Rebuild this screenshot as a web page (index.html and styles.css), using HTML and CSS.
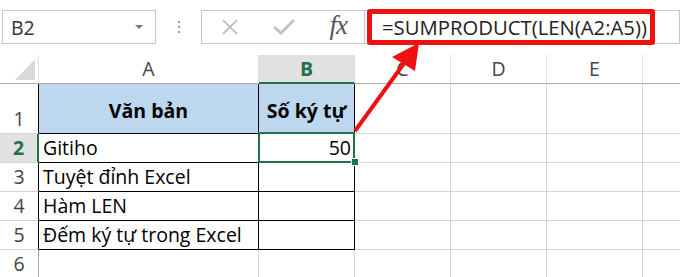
FILE: index.html
```html
<!DOCTYPE html>
<html lang="vi">
<head>
  <meta charset="UTF-8" />
  <title>SUMPRODUCT LEN</title>
  <link rel="stylesheet" href="styles.css">
</head>
<body>
  <div class="bar">
    <div class="namebox">
      <span>B2</span>
      <span class="caret"></span>
    </div>
    <div class="grip"><i></i><i></i><i></i></div>
    <div class="fnbox">
      <svg class="ico" width="18" height="16" viewBox="0 0 18 16">
        <path d="M2 1 L16 15 M16 1 L2 15" stroke="#b4b4b4" stroke-width="1.6" fill="none"/>
      </svg>
      <svg class="ico" width="22" height="16" viewBox="0 0 22 16">
        <path d="M1 8 L8 14 L21 1" stroke="#c4c4c4" stroke-width="3" fill="none"/>
      </svg>
      <span class="fx">fx</span>
    </div>
    <div class="formula">
      <div class="mark">=SUMPRODUCT(LEN(A2:A5))</div>
    </div>
  </div>

  <div class="sheet">
    <div class="c corner"><span class="tri"></span></div>
    <div class="c ch">A</div>
    <div class="c ch sel">B</div>
    <div class="c ch">C</div>
    <div class="c ch">D</div>
    <div class="c ch">E</div>
    <div class="c ch last"></div>

    <div class="c rh tl">1</div>
    <div class="c t head">Văn bản</div>
    <div class="c t head">Số ký tự</div>
    <div class="c"></div><div class="c"></div><div class="c"></div><div class="c last"></div>

    <div class="c rh sel">2</div>
    <div class="c t">Gitiho</div>
    <div class="c t num active">50</div>
    <div class="c"></div><div class="c"></div><div class="c"></div><div class="c last"></div>

    <div class="c rh tl">3</div>
    <div class="c t">Tuyệt đỉnh Excel</div>
    <div class="c t"></div>
    <div class="c"></div><div class="c"></div><div class="c"></div><div class="c last"></div>

    <div class="c rh tl">4</div>
    <div class="c t">Hàm LEN</div>
    <div class="c t"></div>
    <div class="c"></div><div class="c"></div><div class="c"></div><div class="c last"></div>

    <div class="c rh tl">5</div>
    <div class="c t">Đếm ký tự trong Excel</div>
    <div class="c t"></div>
    <div class="c"></div><div class="c"></div><div class="c"></div><div class="c last"></div>

    <div class="c rh">6</div>
    <div class="c"></div><div class="c"></div>
    <div class="c"></div><div class="c"></div><div class="c"></div><div class="c last"></div>
  </div>

  <!-- annotation arrow from B2 up to the formula -->
  <svg class="arrow" width="680" height="277" viewBox="0 0 680 277">
    <line x1="355" y1="131" x2="405" y2="62" stroke="#f01010" stroke-width="4"/>
    <polygon points="419,43 392,57 415,71" fill="#f01010"/>
  </svg>
</body>
</html>
```

FILE: styles.css
```css
body {
  margin: 0;
  background: #fff;
  font-family: 'Open Sans', 'Liberation Sans', sans-serif;
  font-size: 19.5px;
  color: #000;
  width: 680px;
  height: 277px;
  overflow: hidden;
  position: relative;
}

/* formula bar */
.bar {
  display: flex;
  align-items: center;
  height: 34px;
  margin-top: 10px;
  padding-left: 2px;
  color: #333;
}
.namebox {
  box-sizing: border-box;
  width: 154px;
  height: 34px;
  border: 1px solid #c6c6c6;
  display: flex;
  align-items: center;
  justify-content: space-between;
  padding: 0 12px 0 8px;
}
.caret {
  width: 0;
  height: 0;
  border-left: 4px solid transparent;
  border-right: 4px solid transparent;
  border-top: 4px solid #777;
}
.grip {
  width: 45px;
  display: flex;
  flex-direction: column;
  align-items: center;
  gap: 3px;
}
.grip i {
  width: 2px;
  height: 2px;
  background: #9a9a9a;
}
.fnbox {
  box-sizing: border-box;
  width: 164px;
  height: 34px;
  border: 1px solid #c6c6c6;
  display: flex;
  align-items: center;
  justify-content: space-between;
  padding: 0 17px 0 19px;
}
.fx {
  font-family: 'Liberation Serif', serif;
  font-style: italic;
  font-size: 27px;
  line-height: 1;
  color: #555;
  letter-spacing: -1px;
  margin-top: -3px;
}
.formula {
  flex: 1;
  box-sizing: border-box;
  height: 34px;
  border: 1px solid #c6c6c6;
  border-left: none;
  display: flex;
  align-items: center;
  padding-left: 2px;
}
.mark {
  box-sizing: border-box;
  width: 288px;
  height: 36px;
  border: 5px solid #f01010;
  border-radius: 3px;
  background: #fff;
  display: flex;
  align-items: center;
  padding-left: 10px;
  font-size: 20.3px;
  color: #222;
}

/* grid */
.sheet {
  margin-top: 11px;
  display: grid;
  grid-template-columns: 39px 220px 96px 96px 96px 96px 1fr;
  grid-template-rows: 29px 50px repeat(5, 29px);
}
.c {
  box-sizing: border-box;
  border-right: 1px solid #d4d4d4;
  border-bottom: 1px solid #d4d4d4;
  display: flex;
  align-items: flex-end;
  padding: 0 4px 4px;
  line-height: 20px;
  white-space: nowrap;
  position: relative;
}
.last { border-right: none; }

.ch {
  align-items: center;
  justify-content: center;
  padding: 0;
  color: #444;
  border-bottom-color: #ababab;
  border-right-color: #dedede;
}
.ch.sel {
  background: #e1e1e1;
  color: #217346;
  font-weight: bold;
  border-bottom: 2px solid #217346;
}
.corner {
  border-bottom-color: #ababab;
  border-right-color: #dedede;
}
.tri {
  position: absolute;
  right: 3px;
  bottom: 3px;
  width: 0;
  height: 0;
  border-left: 20px solid transparent;
  border-bottom: 21px solid #d9d9d9;
}

.rh {
  justify-content: center;
  padding: 0 0 4px;
  color: #444;
  border-right-color: #ababab;
}
.rh.tl { border-right-color: #000; }
.rh.sel {
  background: #e1e1e1;
  color: #217346;
  font-weight: bold;
  border-right: 2px solid #217346;
}

.t { border-color: #000; }
.head {
  background: #bdd7ee;
  font-weight: bold;
  justify-content: center;
  align-items: center;
  padding: 4px 0 0;
}
.num { justify-content: flex-end; padding-right: 3px; }

.active::after {
  content: "";
  position: absolute;
  left: -1px;
  top: -2px;
  width: 97px;
  height: 31px;
  box-sizing: border-box;
  border: 2px solid #217346;
}
.active::before {
  content: "";
  position: absolute;
  left: 92px;
  top: 24px;
  width: 6px;
  height: 6px;
  background: #217346;
  border: 1px solid #fff;
  z-index: 1;
}

.arrow {
  position: absolute;
  left: 0;
  top: 0;
  pointer-events: none;
}
```
